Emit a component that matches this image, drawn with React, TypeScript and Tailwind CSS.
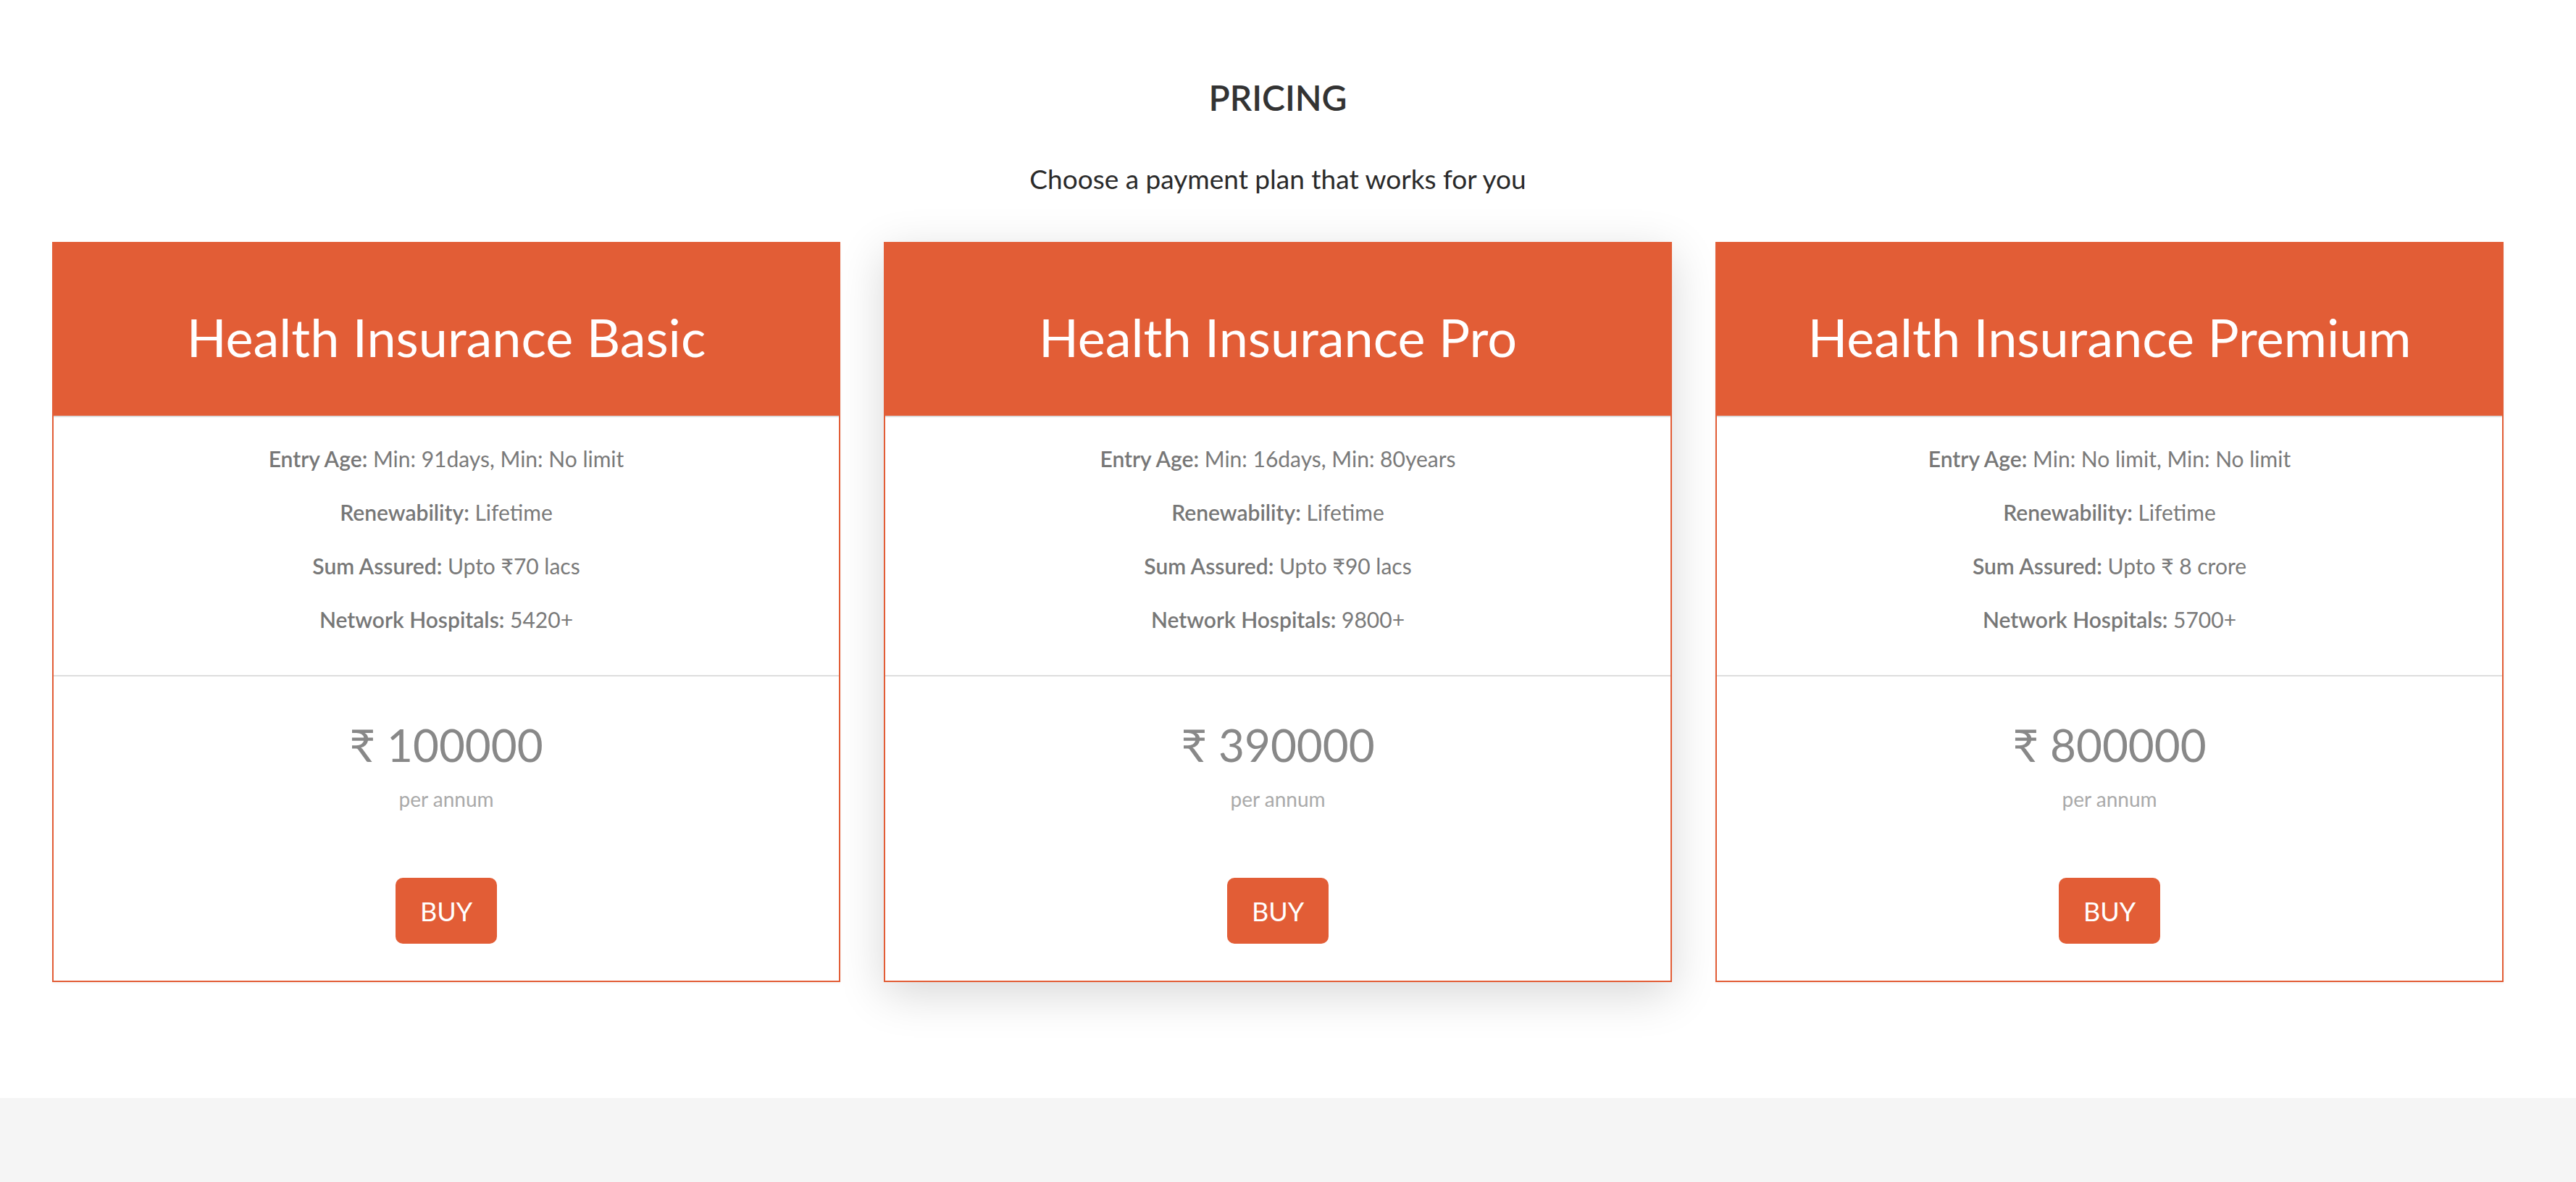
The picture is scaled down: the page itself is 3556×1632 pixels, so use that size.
import React from 'react';

type Plan = {
  name: string;
  entryAge: string;
  sumAssured: string;
  hospitals: string;
  price: string;
  featured?: boolean;
};

const plans: Plan[] = [
  {
    name: 'Health Insurance Basic',
    entryAge: 'Min: 91days, Min: No limit',
    sumAssured: 'Upto ₹70 lacs',
    hospitals: '5420+',
    price: '100000',
  },
  {
    name: 'Health Insurance Pro',
    entryAge: 'Min: 16days, Min: 80years',
    sumAssured: 'Upto ₹90 lacs',
    hospitals: '9800+',
    price: '390000',
    featured: true,
  },
  {
    name: 'Health Insurance Premium',
    entryAge: 'Min: No limit, Min: No limit',
    sumAssured: 'Upto ₹ 8 crore',
    hospitals: '5700+',
    price: '800000',
  },
];

function Feature({ label, value }: { label: string; value: string }) {
  return (
    <p className="text-[30px] leading-[74px] text-[#7a7a7a]">
      <span className="font-semibold text-[#777]">{label}:</span> {value}
    </p>
  );
}

function PlanCard({ plan }: { plan: Plan }) {
  return (
    <div
      className={`flex flex-col border-2 border-[#e25d36] bg-white ${
        plan.featured
          ? 'shadow-[0_16px_60px_rgba(0,0,0,0.16)]'
          : 'shadow-[0_2px_4px_rgba(0,0,0,0.04)]'
      }`}
    >
      {/* Header */}
      <div className="h-[238px] bg-[#e25d36] pt-[86px] text-center">
        <h3 className="text-[72px] leading-[1.2] font-normal text-white">{plan.name}</h3>
      </div>
      <div className="h-[2px] bg-[#dddddd]" />

      {/* Features */}
      <div className="pt-[20px] pb-[40px] text-center">
        <Feature label="Entry Age" value={plan.entryAge} />
        <Feature label="Renewability" value="Lifetime" />
        <Feature label="Sum Assured" value={plan.sumAssured} />
        <Feature label="Network Hospitals" value={plan.hospitals} />
      </div>
      <div className="h-[2px] bg-[#dddddd]" />

      {/* Price */}
      <div className="flex flex-col items-center pt-[56px] pb-[51px]">
        <div className="text-[62px] leading-[77px] text-[#888]">₹ {plan.price}</div>
        <div className="mt-[21px] text-[28px] leading-[31px] text-[#aaa]">per annum</div>
        <button className="mt-[93px] flex h-[91px] w-[140px] items-center justify-center rounded-[10px] bg-[#e25d36] text-[36px] text-white">
          BUY
        </button>
      </div>
    </div>
  );
}

export default function App() {
  return (
    <div className="min-h-screen bg-white font-['Lato','Liberation_Sans',sans-serif]">
      <section className="w-[3528px] pt-[105px] pb-[160px]">
        <h2 className="text-center text-[48px] leading-[60px] font-semibold text-[#333]">PRICING</h2>
        <p className="mt-[59px] text-center text-[37px] leading-[46px] text-[#2a2a2a]">
          Choose a payment plan that works for you
        </p>

        <div className="mt-[64px] ml-[72px] grid w-[3384px] grid-cols-3 gap-[60px]">
          {plans.map((plan) => (
            <PlanCard key={plan.name} plan={plan} />
          ))}
        </div>
      </section>

      {/* Footer band */}
      <div className="h-[116px] bg-[#f5f5f5]" />
    </div>
  );
}
